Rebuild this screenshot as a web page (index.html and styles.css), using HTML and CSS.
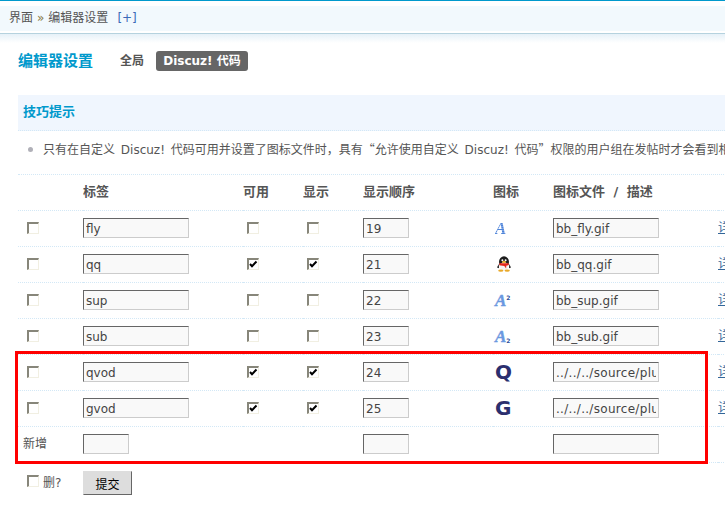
FILE: index.html
```html
<!DOCTYPE html>
<html lang="zh">
<head>
<meta charset="utf-8">
<title>编辑器设置</title>
<link rel="stylesheet" href="styles.css">
</head>
<body>
<header class="topbar">
  <div class="crumbs">界面<span class="sep">»</span>编辑器设置<a class="plus" href="#">[+]</a></div>
  <div class="rule"></div>
</header>
<main class="main">
  <div class="title-row">
    <h1 class="title">编辑器设置</h1>
    <a class="tab" href="#">全局</a>
    <a class="tab tab-on" href="#">Discuz! 代码</a>
  </div>
  <div class="tips-head">技巧提示</div>
  <div class="tip"><i class="dot"></i><span>只有在自定义 Discuz! 代码可用并设置了图标文件时，具有<span class="cjk">“</span>允许使用自定义 Discuz! 代码<span class="cjk">”</span>权限的用户组在发帖时才会看到相应工具栏中的新增按钮。</span></div>
  <div class="table-wrap">
    <table class="grid">
      <colgroup>
        <col class="c1"><col class="c2"><col class="c3"><col class="c3"><col class="c5"><col class="c3"><col class="c7"><col class="c8">
      </colgroup>
      <thead>
        <tr><th></th><th>标签</th><th>可用</th><th>显示</th><th>显示顺序</th><th>图标</th><th>图标文件 / 描述</th><th></th></tr>
      </thead>
      <tbody>
        <tr>
          <td><input class="cb cb-first" type="checkbox"></td>
          <td><input class="txt" value="fly"></td>
          <td><input class="cb cb-col" type="checkbox"></td>
          <td><input class="cb cb-col" type="checkbox"></td>
          <td><input class="txt txt-s" value="19"></td>
          <td><span class="ico-a ico-fly">A</span></td>
          <td><input class="txt" value="bb_fly.gif"></td>
          <td><a class="link" href="#">详情</a></td>
        </tr>
        <tr>
          <td><input class="cb cb-first" type="checkbox"></td>
          <td><input class="txt" value="qq"></td>
          <td><input class="cb cb-col" type="checkbox" checked></td>
          <td><input class="cb cb-col" type="checkbox" checked></td>
          <td><input class="txt txt-s" value="21"></td>
          <td>
            <svg class="ico-qq" width="16" height="16" viewBox="0 0 16 16">
              <ellipse cx="8" cy="6" rx="5" ry="5.8" fill="#1c1c1c"/>
              <path d="M2.8 8 1 11.5l2 .8zM13.2 8l1.8 3.5-2 .8z" fill="#222"/>
              <ellipse cx="8" cy="10.5" rx="4.2" ry="4.3" fill="#f4f4f4"/>
              <path d="M3.5 7.2h9l.4 1.8-2.6.7-.2 2.8-1.8-2.4-5.2-.8z" fill="#e3261c"/>
              <circle cx="6.4" cy="4.2" r="1" fill="#fff"/><circle cx="9.6" cy="4.2" r="1" fill="#fff"/>
              <ellipse cx="8" cy="6" rx="2" ry=".9" fill="#f5b82e"/>
              <ellipse cx="4.8" cy="14.6" rx="2.6" ry="1.2" fill="#e9a92a"/>
              <ellipse cx="11.2" cy="14.6" rx="2.6" ry="1.2" fill="#e9a92a"/>
            </svg>
          </td>
          <td><input class="txt" value="bb_qq.gif"></td>
          <td><a class="link" href="#">详情</a></td>
        </tr>
        <tr>
          <td><input class="cb cb-first" type="checkbox"></td>
          <td><input class="txt" value="sup"></td>
          <td><input class="cb cb-col" type="checkbox"></td>
          <td><input class="cb cb-col" type="checkbox"></td>
          <td><input class="txt txt-s" value="22"></td>
          <td><span class="ico-a">A<span class="mark mark-up">2</span></span></td>
          <td><input class="txt" value="bb_sup.gif"></td>
          <td><a class="link" href="#">详情</a></td>
        </tr>
        <tr>
          <td><input class="cb cb-first" type="checkbox"></td>
          <td><input class="txt" value="sub"></td>
          <td><input class="cb cb-col" type="checkbox"></td>
          <td><input class="cb cb-col" type="checkbox"></td>
          <td><input class="txt txt-s" value="23"></td>
          <td><span class="ico-a">A<span class="mark mark-down">2</span></span></td>
          <td><input class="txt" value="bb_sub.gif"></td>
          <td><a class="link" href="#">详情</a></td>
        </tr>
        <tr>
          <td><input class="cb cb-first" type="checkbox"></td>
          <td><input class="txt" value="qvod"></td>
          <td><input class="cb cb-col" type="checkbox" checked></td>
          <td><input class="cb cb-col" type="checkbox" checked></td>
          <td><input class="txt txt-s" value="24"></td>
          <td><span class="ico-l">Q</span></td>
          <td><input class="txt txt-path" value="../../../source/plugin/qvod/bb_qvod.gif"></td>
          <td><a class="link" href="#">详情</a></td>
        </tr>
        <tr>
          <td><input class="cb cb-first" type="checkbox"></td>
          <td><input class="txt" value="gvod"></td>
          <td><input class="cb cb-col" type="checkbox" checked></td>
          <td><input class="cb cb-col" type="checkbox" checked></td>
          <td><input class="txt txt-s" value="25"></td>
          <td><span class="ico-l">G</span></td>
          <td><input class="txt txt-path" value="../../../source/plugin/gvod/bb_gvod.gif"></td>
          <td><a class="link" href="#">详情</a></td>
        </tr>
        <tr>
          <td><span class="new-label">新增</span></td>
          <td><input class="txt txt-s"></td>
          <td></td>
          <td></td>
          <td><input class="txt txt-s"></td>
          <td></td>
          <td><input class="txt"></td>
          <td></td>
        </tr>
      </tbody>
      <tfoot>
        <tr>
          <td><label class="del"><input class="cb cb-del" type="checkbox">删?</label></td>
          <td colspan="7"><button class="submit" type="button">提交</button></td>
        </tr>
      </tfoot>
    </table>
    <div class="highlight"></div>
  </div>
</main>
</body>
</html>
```
FILE: styles.css
```css
html, body {
  margin: 0;
  padding: 0;
  height: 506px;
  overflow: hidden;
  background: #fff;
}
body {
  font: 12px/20px "DejaVu Sans", "Noto Sans CJK SC", sans-serif;
  color: #555;
}
a { text-decoration: none; }

.topbar {
  border-top: 1px solid #0099cc;
  padding-top: 5px;
}
.crumbs {
  height: 25px;
  line-height: 25px;
  padding-left: 9px;
  background: #f2f9fd;
  color: #555;
}
.sep {
  margin: 0 4px;
  color: #887744;
}
.plus {
  margin-left: 9px;
  color: #3a6ab8;
}
.rule {
  margin-top: 2px;
  height: 9px;
  border-top: 1px solid #b5d2de;
  background: linear-gradient(to bottom, #e6f1f8, #fff);
}

.main {
  padding: 8px 0 0 18px;
  overflow: hidden;
}
.title-row {
  display: flex;
  align-items: center;
  height: 20px;
}
.title {
  width: 102px;
  margin: 0;
  font-size: 15px;
  font-weight: bold;
  color: #0099cc;
}
.tab {
  width: 36px;
  font-weight: bold;
  color: #555;
}
.tab-on {
  width: 92px;
  height: 20px;
  line-height: 20px;
  text-align: center;
  color: #fff;
  background: #666;
  border-radius: 3px;
  white-space: nowrap;
}
.tips-head {
  margin-top: 24px;
  height: 35px;
  line-height: 34px;
  padding-left: 5px;
  font-size: 13px;
  font-weight: bold;
  color: #0099cc;
  background: #f0f6fe;
  border-bottom: 1px dotted #d3e8f6;
}
.tip {
  display: flex;
  align-items: center;
  height: 43px;
  padding: 0 0 7px 10px;
  box-sizing: border-box;
  white-space: nowrap;
  word-spacing: 2px;
}
.cjk {
  font-family: "Noto Sans CJK SC", sans-serif;
}
.dot {
  flex: none;
  width: 5px;
  height: 5px;
  margin-right: 10px;
  border-radius: 50%;
  background: #b0b0b8;
}

.table-wrap {
  position: relative;
  width: 740px;
}
.grid {
  width: 740px;
  table-layout: fixed;
  border-collapse: separate;
  border-spacing: 0;
  border-top: 1px dotted #d3e8f6;
}
.c1 { width: 65px; }
.c2 { width: 160px; }
.c3 { width: 60px; }
.c5 { width: 130px; }
.c7 { width: 165px; }
.c8 { width: 40px; }
.grid th, .grid td {
  box-sizing: border-box;
  height: 36px;
  padding: 0 0 1px;
  text-align: left;
  vertical-align: middle;
  border-bottom: 1px dotted #d3e8f6;
  overflow: hidden;
  white-space: nowrap;
}
.grid th {
  font-size: 13px;
  font-weight: bold;
  color: #555;
  word-spacing: 4px;
}
.grid tfoot td {
  height: 40px;
  padding: 8px 0 0;
  vertical-align: top;
  border-bottom: 0;
}

.cb {
  display: block;
  appearance: none;
  box-sizing: border-box;
  width: 12px;
  height: 12px;
  margin: 0;
  background: #fff no-repeat center;
  border-style: solid;
  border-width: 2px 1px 1px 2px;
  border-color: #87867a #f1efe2 #f1efe2 #87867a;
}
.cb:checked {
  background-image: url("data:image/svg+xml,%3Csvg xmlns='http://www.w3.org/2000/svg' width='9' height='9'%3E%3Cpath d='M1 4l2 2.2L7.5 1.5' fill='none' stroke='%23000' stroke-width='2'/%3E%3C/svg%3E");
}
.cb-first { margin-left: 9px; }
.cb-col { margin-left: 4px; }
.cb-del { margin: 0 4px 4px 9px; flex: none; }

.txt {
  display: block;
  box-sizing: border-box;
  width: 106px;
  height: 20px;
  margin: 0;
  padding: 2px 2px 0;
  font: 12px "DejaVu Sans", sans-serif;
  color: #444;
  background: #f9f9f9;
  border-style: solid;
  border-width: 1px;
  border-color: #666 #ccc #ccc #666;
  outline: 0;
}
.txt-s { width: 46px; }
.txt-path { letter-spacing: .3px; }

.ico-a {
  display: inline-block;
  width: 20px;
  margin-left: 2px;
  font: italic bold 17px/15px "Liberation Serif", serif;
  color: #6a98e0;
  vertical-align: middle;
  -webkit-text-stroke: .4px #6a98e0;
}
.ico-fly {
  color: transparent;
  -webkit-text-stroke: 0;
  background: repeating-linear-gradient(to bottom, #4f84d8 0 1px, #78a2e6 1px 2px);
  background-clip: text;
  -webkit-background-clip: text;
}
.mark {
  font: bold 6px/6px "DejaVu Sans", sans-serif;
  color: #2f4f9a;
  vertical-align: 6px;
  -webkit-text-stroke: 0;
}
.mark-down { vertical-align: -1px; }
.ico-l {
  display: block;
  margin-left: 2px;
  font: bold 20px/20px "DejaVu Sans", sans-serif;
  color: #2b2f6e;
}
.ico-qq {
  display: block;
  margin-left: 3px;
}
.link {
  color: #336699;
  text-decoration: underline;
}
.new-label { margin-left: 5px; }
.del {
  display: flex;
  align-items: center;
  height: 24px;
}
.submit {
  display: block;
  box-sizing: border-box;
  width: 49px;
  height: 24px;
  padding: 0;
  font: 12px "DejaVu Sans", "Noto Sans CJK SC", sans-serif;
  color: #000;
  background: #ddd;
  border-style: solid;
  border-width: 1px;
  border-color: #ddd #666 #666 #ddd;
}
.highlight {
  position: absolute;
  left: -3px;
  top: 177px;
  width: 693px;
  height: 113px;
  box-sizing: border-box;
  border: 3px solid #ff0000;
}
```
